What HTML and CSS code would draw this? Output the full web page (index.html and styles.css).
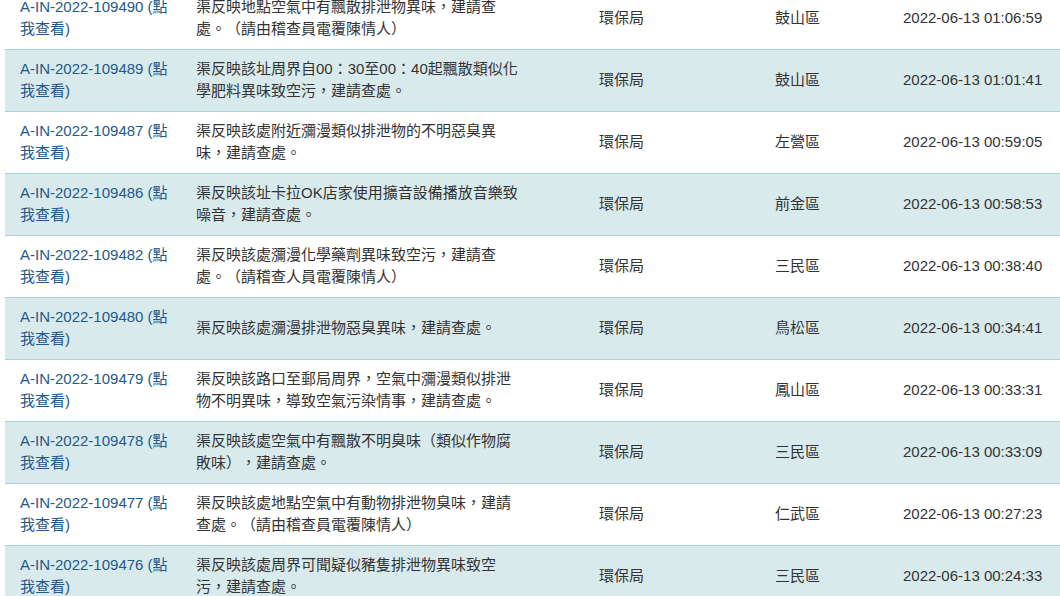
FILE: index.html
```html
<!DOCTYPE html>
<html lang="zh-Hant">
<head>
<meta charset="utf-8">
<title>陳情案件列表</title>
<link rel="stylesheet" href="styles.css">
</head>
<body>
<table class="cases">
  <colgroup>
    <col class="c-no"><col class="c-desc"><col class="c-unit"><col class="c-area"><col class="c-time">
  </colgroup>
  <tbody>
    <tr><td class="no"><a href="#">A-IN-2022-109490 (點我查看)</a></td><td><div class="desc">渠反映地點空氣中有飄散排泄物異味，建請查處。（請由稽查員電覆陳情人）</div></td><td>環保局</td><td>鼓山區</td><td>2022-06-13 01:06:59</td></tr>
    <tr class="alt"><td class="no"><a href="#">A-IN-2022-109489 (點我查看)</a></td><td><div class="desc">渠反映該址周界自00：30至00：40起飄散類似化學肥料異味致空污，建請查處。</div></td><td>環保局</td><td>鼓山區</td><td>2022-06-13 01:01:41</td></tr>
    <tr><td class="no"><a href="#">A-IN-2022-109487 (點我查看)</a></td><td><div class="desc">渠反映該處附近瀰漫類似排泄物的不明惡臭異味，建請查處。</div></td><td>環保局</td><td>左營區</td><td>2022-06-13 00:59:05</td></tr>
    <tr class="alt"><td class="no"><a href="#">A-IN-2022-109486 (點我查看)</a></td><td><div class="desc">渠反映該址卡拉OK店家使用擴音設備播放音樂致噪音，建請查處。</div></td><td>環保局</td><td>前金區</td><td>2022-06-13 00:58:53</td></tr>
    <tr><td class="no"><a href="#">A-IN-2022-109482 (點我查看)</a></td><td><div class="desc">渠反映該處瀰漫化學藥劑異味致空污，建請查處。（請稽查人員電覆陳情人）</div></td><td>環保局</td><td>三民區</td><td>2022-06-13 00:38:40</td></tr>
    <tr class="alt"><td class="no"><a href="#">A-IN-2022-109480 (點我查看)</a></td><td><div class="desc">渠反映該處瀰漫排泄物惡臭異味，建請查處。</div></td><td>環保局</td><td>鳥松區</td><td>2022-06-13 00:34:41</td></tr>
    <tr><td class="no"><a href="#">A-IN-2022-109479 (點我查看)</a></td><td><div class="desc">渠反映該路口至郵局周界，空氣中瀰漫類似排泄物不明異味，導致空氣污染情事，建請查處。</div></td><td>環保局</td><td>鳳山區</td><td>2022-06-13 00:33:31</td></tr>
    <tr class="alt"><td class="no"><a href="#">A-IN-2022-109478 (點我查看)</a></td><td><div class="desc">渠反映該處空氣中有飄散不明臭味（類似作物腐敗味），建請查處。</div></td><td>環保局</td><td>三民區</td><td>2022-06-13 00:33:09</td></tr>
    <tr><td class="no"><a href="#">A-IN-2022-109477 (點我查看)</a></td><td><div class="desc">渠反映該處地點空氣中有動物排泄物臭味，建請查處。（請由稽查員電覆陳情人）</div></td><td>環保局</td><td>仁武區</td><td>2022-06-13 00:27:23</td></tr>
    <tr class="alt"><td class="no"><a href="#">A-IN-2022-109476 (點我查看)</a></td><td><div class="desc">渠反映該處周界可聞疑似豬隻排泄物異味致空污，建請查處。</div></td><td>環保局</td><td>三民區</td><td>2022-06-13 00:24:33</td></tr>
  </tbody>
</table>
</body>
</html>
```

FILE: styles.css
```css
html, body {
  margin: 0;
  padding: 0;
  background: #ffffff;
  overflow: hidden;
}

body {
  padding-left: 5px;
  font-family: "Liberation Sans", "Noto Sans CJK TC", sans-serif;
  font-size: 15px;
  line-height: 22px;
  color: #333333;
  text-spacing-trim: space-all;
}

.cases {
  border-collapse: collapse;
  table-layout: fixed;
  width: 1083px;
  margin-top: -13px;
}

.c-no { width: 176px; }
.c-desc { width: 403px; }
.c-unit { width: 176px; }
.c-area { width: 128px; }
.c-time { width: 200px; }

.cases tr {
  border-top: 1px solid #a9d0d5;
}

.cases tr.alt {
  background: #d9eaed;
}

.cases td {
  padding: 8px 15px 9px 15px;
  vertical-align: middle;
  height: 44px;
}

.cases td.no {
  padding-right: 8px;
}

.cases a {
  color: #23598a;
  text-decoration: none;
}

.desc {
  width: 325px;
}
```
